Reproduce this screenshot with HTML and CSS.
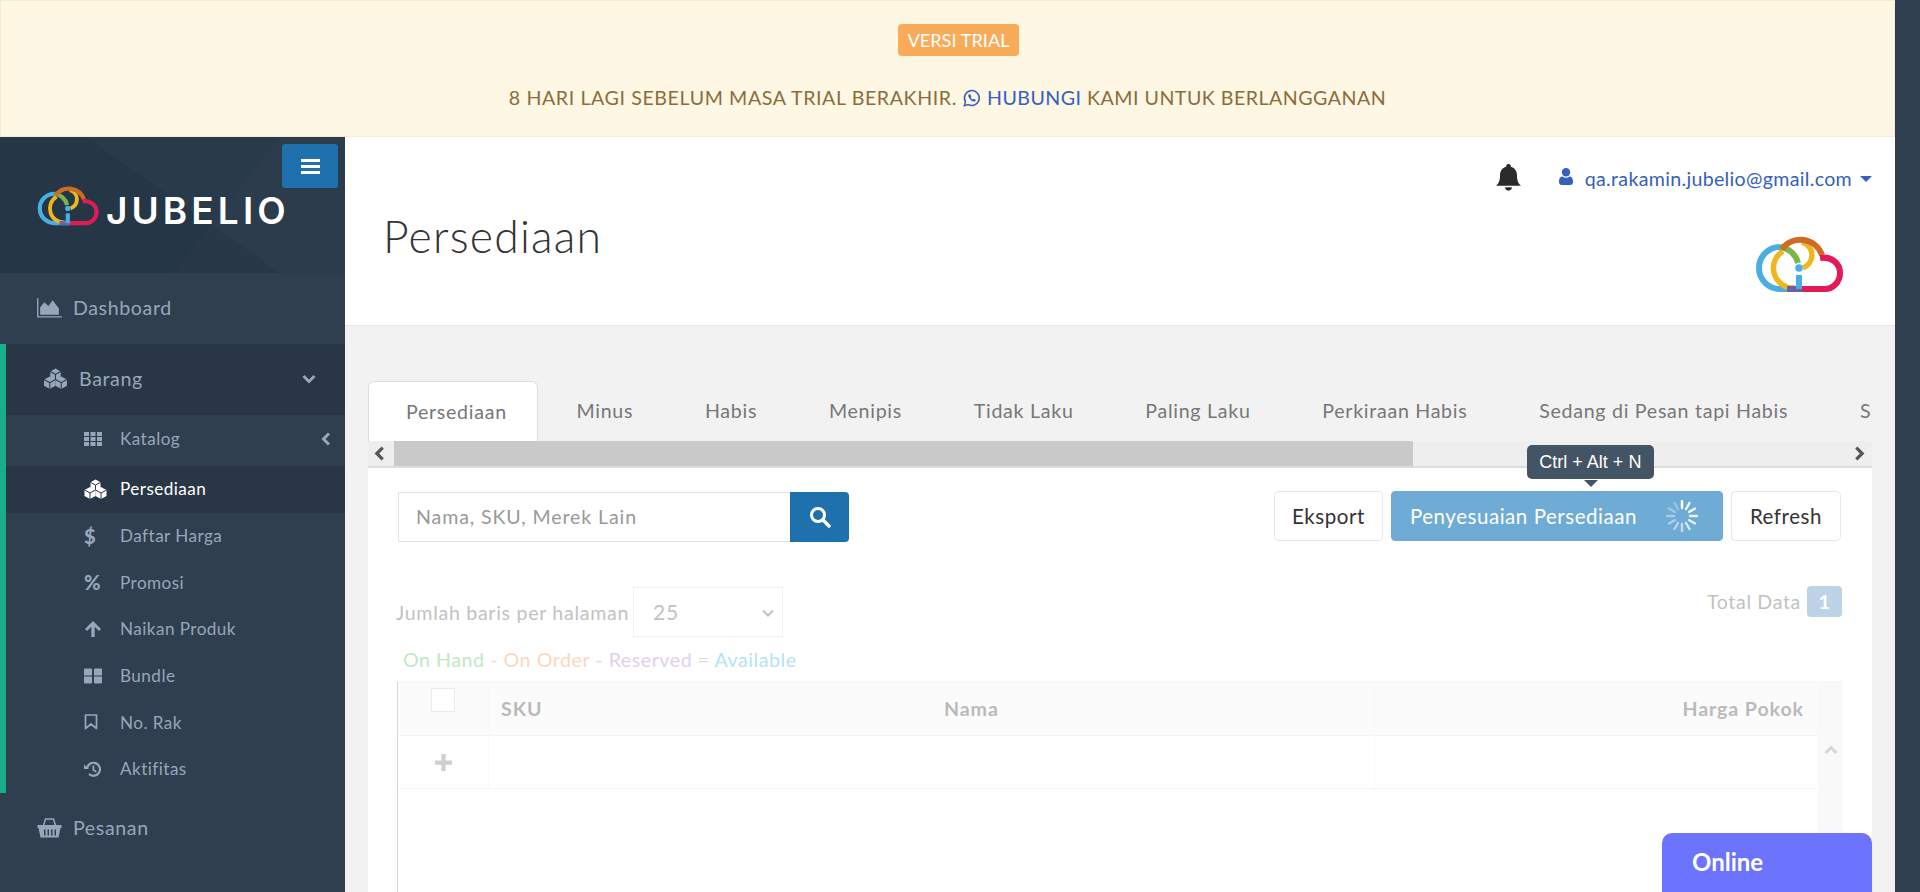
FILE: index.html
```html
<!DOCTYPE html>
<html>
    <head>
        <title>Jubelio - Persediaan</title>
        <link rel="stylesheet" href="styles.css">
    </head>
    <body>
        <svg class="defs" width="0" height="0">
            <symbol id="i-cubes" viewBox="0 0 24 20">
                <g class="cube"><path d="M12 .5l5 2.8v5.6l-5 2.8-5-2.8V3.300z"/><path class="cut" d="M7 3.300l5 2.800 5-2.800M12 6.100v5.600"/></g>
                <g class="cube"><path d="M6.500 8l5.500 3v6l-5.500 3L1 17v-6z"/><path class="cut" d="M1 11l5.500 3 5.500-3M6.500 14v6"/></g>
                <g class="cube"><path d="M17.500 8l5.500 3v6l-5.500 3-5.500-3v-6z"/><path class="cut" d="M12 11l5.500 3 5.500-3M17.500 14v6"/></g>
            </symbol>
            <symbol id="i-logo" viewBox="10 6 90 57">
                <g fill="none" stroke-width="6">
                    <path stroke="#4aaee3" d="M35 17A21 21 0 0 0 35 59H57"/>
                    <path stroke="#efb71e" stroke-width="5.500" d="M38 21A20 20 0 0 0 50 58M57 12C64 14 67 20 67 25 67 31 63 36 58 38"/>
                    <path stroke="#7ab648" d="M35 17A21 21 0 0 1 53 33"/>
                    <path stroke="#cf6b22" d="M37 19A23 23 0 0 1 77 25"/>
                    <path stroke="#e01b57" d="M75 28C86 26 95 33 95 43 95 52 88 59 80 59H57"/>
                    <path stroke="#6b60a8" d="M42 59H57"/>
                    <path stroke="#4aaee3" d="M54 45V59"/>
                </g>
                <circle cx="54" cy="38" r="3.800" fill="#4aaee3"/>
            </symbol>
        </svg>

        <div class="page">
            <div class="banner">
                <span class="badge">VERSI TRIAL</span>
                <p class="banner-msg">
                    <span class="msg-lead">8 HARI LAGI SEBELUM MASA TRIAL BERAKHIR.</span>
                    <a href="#" class="link">
                        <svg class="ic-wa" viewBox="0 0 20 20"><path d="M2.500 17.500l1.100-4.100A7.800 7.800 0 1 1 6.700 16.400z" fill="none" stroke="currentColor" stroke-width="1.600"/><path d="M7 5.800c-1 1-.2 3.200 1.700 5.200s4.200 2.800 5.300 1.800l.6-1.300-2.200-1.200-.8.800c-1-.3-2.200-1.500-2.500-2.500l.8-.8-1.200-2.200z" fill="currentColor"/></svg>
                        HUBUNGI</a>
                    KAMI UNTUK BERLANGGANAN
                </p>
            </div>

            <div class="app">
                <div class="sidebar">
                    <div class="side-head">
                        <button class="burger"><span></span><span></span><span></span></button>
                        <svg class="side-logo"><use href="#i-logo"/></svg>
                        <span class="brand">JUBELIO</span>
                    </div>
                    <a class="menu-item" href="#">
                        <svg class="menu-ic" viewBox="0 0 24 20"><path d="M.7 1v18h23" fill="none" stroke="currentColor" stroke-width="1.300"/><path d="M3 17V10l4-5 4 3.500 4-5.500 6 8v6z" fill="currentColor"/></svg>
                        Dashboard
                    </a>
                    <div class="menu-open">
                        <a class="menu-item menu-parent" href="#">
                            <svg class="menu-ic"><use href="#i-cubes"/></svg>
                            Barang
                            <svg class="chev chev-down" viewBox="0 0 14 10"><path d="M1.500 2l5.500 5.500L12.500 2"/></svg>
                        </a>
                        <div class="submenu">
                            <a class="sub-item sub-first" href="#">
                                <svg class="sub-ic" viewBox="0 0 18 14"><path d="M0 0h5v4H0zM6.500 0h5v4h-5zM13 0h5v4h-5zM0 5h5v4H0zM6.500 5h5v4h-5zM13 5h5v4h-5zM0 10h5v4H0zM6.500 10h5v4h-5zM13 10h5v4h-5z" fill="currentColor"/></svg>
                                Katalog
                                <svg class="chev chev-left" viewBox="0 0 10 14"><path d="M8 1.500L2.500 7 8 12.500"/></svg>
                            </a>
                            <a class="sub-item active" href="#"><svg class="sub-ic sub-cubes"><use href="#i-cubes"/></svg>Persediaan</a>
                            <a class="sub-item" href="#"><span class="sub-glyph">$</span>Daftar Harga</a>
                            <a class="sub-item" href="#"><span class="sub-glyph">%</span>Promosi</a>
                            <a class="sub-item" href="#">
                                <svg class="sub-ic" viewBox="0 0 18 16"><path d="M9 0l8 8-2 2-4.300-4.200V16H7.300V5.800L3 10 1 8z" fill="currentColor"/></svg>
                                Naikan Produk
                            </a>
                            <a class="sub-item" href="#">
                                <svg class="sub-ic" viewBox="0 0 18 15"><path d="M0 1a1 1 0 0 1 1-1h6a1 1 0 0 1 1 1v5a1 1 0 0 1-1 1H0zM10 1a1 1 0 0 1 1-1h6a1 1 0 0 1 1 1v6h-8zM0 8h8v6a1 1 0 0 1-1 1H1a1 1 0 0 1-1-1zM10 8h8v6a1 1 0 0 1-1 1h-6a1 1 0 0 1-1-1z" fill="currentColor"/></svg>
                                Bundle
                            </a>
                            <a class="sub-item" href="#">
                                <svg class="sub-ic" viewBox="0 0 18 16"><path d="M1.500 1h11v13.500L7 10l-5.500 4.500z" fill="none" stroke="currentColor" stroke-width="1.700" stroke-linejoin="round"/></svg>
                                No. Rak
                            </a>
                            <a class="sub-item" href="#">
                                <svg class="sub-ic" viewBox="0 0 18 16"><path d="M3 7.500A6.500 6.500 0 1 1 5 13" fill="none" stroke="currentColor" stroke-width="2.200"/><path d="M0 3.500l5 4.500H0zM8.500 4.500h1.800v4l2.500 1.500-1 1.400-3.300-2z" fill="currentColor"/></svg>
                                Aktifitas
                            </a>
                        </div>
                    </div>
                    <a class="menu-item" href="#">
                        <svg class="menu-ic" viewBox="0 0 24 21"><path d="M6 8.500l2-6.500h8l2 6.500" fill="none" stroke="currentColor" stroke-width="1.500"/><path d="M0 8h24v3h-1l-2 9.500H3L1 11H0zM6.500 12.500v6h1.500v-6zM10 12.500v6h1.500v-6zM13.500 12.500v6H15v-6zM17 12.500v6h1.500v-6z" fill="currentColor" fill-rule="evenodd"/></svg>
                        Pesanan
                    </a>
                    <a class="menu-item" href="#">
                        <svg class="menu-ic" viewBox="0 0 24 20"><rect x="6" y="8" width="12" height="12" fill="currentColor"/></svg>
                        Pengiriman
                    </a>
                </div>

                <div class="main">
                    <div class="page-head">
                        <div class="topbar">
                            <svg class="ic-bell" viewBox="0 0 24 27"><path d="M12 0a2.200 2.200 0 0 1 2.200 2.700c4 1 6 4.300 6 8.300 0 6 1.800 8 3.800 10H0c2-2 3.800-4 3.800-10 0-4 2-7.300 6-8.300A2.200 2.200 0 0 1 12 0z"/><path d="M8.800 22.500a3.200 3.200 0 0 0 6.400 0z"/></svg>
                            <a href="#" class="user-link">
                                <svg class="ic-user" viewBox="0 0 14 17"><circle cx="7" cy="4.200" r="4.200"/><path d="M0 14c0-4 1.500-5.500 3.500-5.500 1 .8 2.200 1.200 3.500 1.200s2.500-.4 3.500-1.200c2 0 3.500 1.500 3.500 5.500 0 2-1.200 3-2.800 3H2.800C1.200 17 0 16 0 14z"/></svg>
                                qa.rakamin.jubelio@gmail.com
                                <span class="caret"></span>
                            </a>
                        </div>
                        <div class="title-row">
                            <h1 class="page-title">Persediaan</h1>
                            <svg class="head-logo"><use href="#i-logo"/></svg>
                        </div>
                    </div>

                    <div class="content">
                        <div class="tabs">
                            <a class="tab tab-active" href="#">Persediaan</a>
                            <a class="tab" href="#">Minus</a>
                            <a class="tab" href="#">Habis</a>
                            <a class="tab" href="#">Menipis</a>
                            <a class="tab" href="#">Tidak Laku</a>
                            <a class="tab" href="#">Paling Laku</a>
                            <a class="tab" href="#">Perkiraan Habis</a>
                            <a class="tab" href="#">Sedang di Pesan tapi Habis</a>
                            <a class="tab" href="#">Sudah di Pesan</a>
                        </div>
                        <div class="tab-scroll">
                            <span class="scroll-btn"><svg class="chev chev-scroll chev-back" viewBox="0 0 10 14"><path d="M8 1.500L2.500 7 8 12.500"/></svg></span>
                            <span class="scroll-thumb"></span>
                            <span class="scroll-rest"></span>
                            <span class="scroll-btn"><svg class="chev chev-scroll" viewBox="0 0 10 14"><path d="M2 1.500L7.500 7 2 12.500"/></svg></span>
                        </div>

                        <div class="panel">
                            <div class="toolbar">
                                <div class="search">
                                    <input class="search-input" placeholder="Nama, SKU, Merek Lain">
                                    <button class="search-btn">
                                        <svg viewBox="0 0 22 22" width="22" height="22"><circle cx="9" cy="9" r="6.500" fill="none" stroke="#fff" stroke-width="3"/><path d="M14 14l6 6" stroke="#fff" stroke-width="3.400" stroke-linecap="round"/></svg>
                                    </button>
                                </div>
                                <div class="actions">
                                    <button class="btn">Eksport</button>
                                    <div class="btn btn-primary">
                                        Penyesuaian Persediaan
                                        <svg class="spinner" viewBox="-16 -16 32 32">
                                            <path opacity="1" d="M0-15v7"/>
                                            <path opacity=".95" d="M7.500-13l-3.500 6"/>
                                            <path opacity=".9" d="M13-7.500l-6 3.500"/>
                                            <path opacity=".85" d="M15 0H8"/>
                                            <path opacity=".8" d="M13 7.500l-6-3.500"/>
                                            <path opacity=".75" d="M7.500 13L4 7"/>
                                            <path opacity=".6" d="M0 15V8"/>
                                            <path opacity=".5" d="M-7.500 13L-4 7"/>
                                            <path opacity=".45" d="M-13 7.500l6-3.500"/>
                                            <path opacity=".4" d="M-15 0h7"/>
                                            <path opacity=".35" d="M-13-7.500l6 3.500"/>
                                            <path opacity=".3" d="M-7.500-13l3.500 6"/>
                                        </svg>
                                        <div class="tooltip">Ctrl + Alt + N</div>
                                    </div>
                                    <button class="btn btn-refresh">Refresh</button>
                                </div>
                            </div>

                            <div class="faded">
                                <div class="list-meta">
                                    <div class="per-page">
                                        <span>Jumlah baris per halaman</span>
                                        <div class="select">25<svg class="chev chev-select" viewBox="0 0 14 10"><path d="M2 2.500l5 5 5-5"/></svg></div>
                                    </div>
                                    <div class="total">Total Data <span class="total-num">1</span></div>
                                </div>
                                <div class="legend">
                                    <span class="c-green">On Hand</span> - <span class="c-orange">On Order</span> - <span class="c-purple">Reserved</span> = <span class="c-blue">Available</span>
                                </div>
                                <div class="grid">
                                    <div class="cell cell-head cell-check"><span class="checkbox"></span></div>
                                    <div class="cell cell-head">SKU</div>
                                    <div class="cell cell-head cell-name">Nama</div>
                                    <div class="cell cell-head cell-price">Harga Pokok</div>
                                    <div class="cell cell-bar"></div>
                                    <div class="cell cell-check"><svg viewBox="0 0 16 16" width="17" height="17"><path d="M6 0h4v6h6v4h-6v6H6v-6H0V6h6z" fill="#888"/></svg></div>
                                    <div class="cell"></div>
                                    <div class="cell"></div>
                                    <div class="cell cell-price"></div>
                                    <div class="cell cell-bar"><svg class="chev chev-bar" viewBox="0 0 14 10"><path d="M1.500 8L7 2.500 12.500 8"/></svg></div>
                                    <div class="grid-rest"></div>
                                    <div class="cell-bar bar-rest"></div>
                                </div>
                            </div>
                        </div>
                    </div>
                    <div class="chat-tab">Online</div>
                </div>
            </div>
        </div>
    </body>
</html>
```

FILE: styles.css
```css
html, body {
    height: 100%;
}
body {
    background: #2f3f50;
    font-family: Lato, "Open Sans", sans-serif;
    font-size: 19.6px;
    margin: 0px;
    overflow: hidden;
}
a {
    text-decoration: none;
}
.defs {
    display: block;
    height: 0px;
}
.page {
    width: 1895px;
    height: 892px;
    display: flex;
    flex-direction: column;
}

/* trial banner */
.banner {
    background: #fdf7e3;
    border: 1px solid #faebcc;
    box-sizing: border-box;
    height: 137px;
    flex: none;
    text-align: center;
    color: #8a6d3b;
    padding-top: 23px;
}
.badge {
    display: inline-block;
    background: #f9ab5a;
    color: #ffffff;
    font-size: 18.2px;
    line-height: 32px;
    height: 32px;
    padding: 0px 9px;
    margin-left: 22px;
    border-radius: 4px;
}
.banner-msg {
    margin: 28px 0px 0px 0px;
    line-height: 28px;
    letter-spacing: 0.49px;
}
.msg-lead {
    letter-spacing: 0.6px;
}
.link {
    color: #3461bb;
}
.ic-wa {
    width: 19px;
    height: 19px;
    vertical-align: -3px;
}

.app {
    display: flex;
    flex: 1;
    min-height: 0px;
}

/* sidebar */
.sidebar {
    width: 345px;
    flex: none;
    background: #2f3f50;
    color: #98a6ba;
}
.side-head {
    position: relative;
    height: 136px;
    box-sizing: border-box;
    display: flex;
    align-items: flex-start;
    padding: 49px 0px 0px 37px;
    background:
        linear-gradient(128deg, transparent 62%, rgba(255,255,255,0.012) 62%, rgba(255,255,255,0.012) 100%),
        linear-gradient(35deg, transparent 52%, rgba(255,255,255,0.018) 52%),
        #253647;
}
.burger {
    position: absolute;
    top: 7px;
    right: 7px;
    width: 56px;
    height: 44px;
    background: #1f71ad;
    border: none;
    border-radius: 3px;
    display: flex;
    flex-direction: column;
    justify-content: center;
    align-items: center;
    gap: 3px;
    padding: 0px;
}
.burger span {
    display: block;
    width: 19px;
    height: 3px;
    background: #ffffff;
}
.side-logo {
    width: 63px;
    height: 40px;
    flex: none;
}
.brand {
    font-family: Inter, sans-serif;
    font-weight: 600;
    font-size: 37px;
    line-height: 40px;
    letter-spacing: 4.1px;
    color: #ffffff;
    margin: 5px 0px 0px 6px;
}
.menu-item {
    display: flex;
    align-items: center;
    height: 71px;
    box-sizing: border-box;
    padding: 0px 0px 2px 37px;
    color: #98a6ba;
    letter-spacing: 0.62px;
}
.menu-ic {
    width: 25px;
    height: 21px;
    flex: none;
    margin-right: 11px;
    --cut: #283646;
}
.menu-open {
    border-left: 6px solid #19ad8a;
}
.menu-parent {
    background: #283646;
}
.chev {
    fill: none;
    stroke: currentColor;
    stroke-width: 3;
}
.chev-down {
    width: 14px;
    height: 10px;
    margin-left: auto;
    margin-right: 29px;
}
.sub-item {
    display: flex;
    align-items: center;
    height: 46.7px;
    box-sizing: border-box;
    padding: 0px 0px 1px 78px;
    color: #98a6ba;
    font-size: 17.14px;
    letter-spacing: 0.45px;
    --cut: #2f3f50;
}
.sub-first {
    height: 48px;
    margin-bottom: 3px;
}
.sub-item.active {
    background: #283646;
    color: #ffffff;
    --cut: #283646;
}
.sub-ic {
    width: 18px;
    height: 16px;
    flex: none;
    margin-right: 18px;
}
.sub-cubes {
    width: 25px;
    height: 20px;
    margin: 0px 12px 0px -1px;
}
.sub-glyph {
    width: 36px;
    flex: none;
    font-weight: 900;
    font-size: 20px;
}
.chev-left {
    width: 10px;
    height: 14px;
    margin-left: auto;
    margin-right: 14px;
}
.cube path {
    fill: currentColor;
}
.cube .cut {
    fill: none;
    stroke: var(--cut);
    stroke-width: 1;
}

/* main column */
.main {
    position: relative;
    flex: 1;
    min-width: 0px;
    background: #f2f2f2;
    display: flex;
    flex-direction: column;
    overflow: hidden;
}
.page-head {
    background: #ffffff;
    border-bottom: 1px solid #e6e6e6;
    box-sizing: border-box;
    height: 189px;
    flex: none;
    padding: 27px 23px 0px 38px;
}
.topbar {
    display: flex;
    justify-content: flex-end;
    align-items: center;
    height: 28px;
}
.ic-bell {
    width: 25px;
    height: 28px;
    fill: #2b2b2b;
    margin-right: 38px;
}
.user-link {
    color: #3461bb;
    display: flex;
    align-items: center;
    letter-spacing: 0.32px;
}
.ic-user {
    width: 14px;
    height: 17px;
    fill: #3461bb;
    margin-right: 12px;
    margin-top: -4px;
}
.caret {
    width: 0px;
    height: 0px;
    border-left: 6px solid transparent;
    border-right: 6px solid transparent;
    border-top: 6px solid #3461bb;
    margin-left: 8px;
    margin-top: 2px;
}
.title-row {
    display: flex;
    justify-content: space-between;
}
.page-title {
    font-weight: 300;
    font-size: 44.5px;
    line-height: 60px;
    letter-spacing: 1.2px;
    color: #333333;
    margin: 14px 0px 0px 0px;
}
.head-logo {
    width: 90px;
    height: 57px;
    margin: 44px 27px 0px 0px;
}

.content {
    flex: 1;
    display: flex;
    flex-direction: column;
    min-height: 0px;
    padding: 55px 23px 0px 23px;
}
.tabs {
    display: flex;
    height: 60px;
    flex: none;
    overflow: hidden;
    white-space: nowrap;
}
.tab {
    padding: 0px 33px 0px 35.75px;
    margin-right: 3px;
    line-height: 60px;
    color: #777777;
    letter-spacing: 0.72px;
}
.tab-active {
    background: #ffffff;
    border: 1px solid #dddddd;
    border-bottom: none;
    border-radius: 6px 6px 0px 0px;
    padding: 0px 30px 0px 37px;
}
.tab-scroll {
    display: flex;
    height: 25px;
    flex: none;
    background: #eeeeee;
    border-bottom: 2px solid #dddddd;
    color: #555555;
}
.scroll-btn {
    width: 26px;
    flex: none;
    display: flex;
    align-items: center;
    justify-content: center;
}
.chev-scroll {
    width: 11px;
    height: 15px;
}
.chev-back {
    margin-right: 3px;
}
.scroll-thumb {
    width: 1019px;
    background: #c9c9c9;
}
.scroll-rest {
    flex: 1;
}
.panel {
    flex: 1;
    background: #ffffff;
    padding: 24px 30px 0px 29px;
    min-height: 0px;
}
.toolbar {
    display: flex;
    justify-content: space-between;
    height: 50px;
}
.search {
    display: flex;
    height: 50px;
    margin-left: 1px;
}
.search-input {
    width: 392px;
    box-sizing: border-box;
    border: 1px solid #e2e2e2;
    border-right: none;
    font-family: inherit;
    font-size: 19.6px;
    letter-spacing: 0.88px;
    padding: 0px 17px 2px 17px;
    outline: none;
}
.search-input::placeholder {
    color: #999999;
}
.search-btn {
    width: 59px;
    background: #1f71ad;
    border: none;
    border-radius: 0px 4px 4px 0px;
    padding: 0px;
    display: flex;
    align-items: center;
    justify-content: center;
}
.actions {
    display: flex;
    gap: 8px;
    height: 50px;
    margin: -1px 1px 0px 0px;
}
.btn {
    font-family: inherit;
    font-size: 20.5px;
    letter-spacing: 0.55px;
    color: #333333;
    background: #ffffff;
    border: 1px solid #e8e8e8;
    border-radius: 4px;
    box-sizing: border-box;
    padding: 0px 17px;
    height: 50px;
}
.btn-refresh {
    padding: 0px 18px;
}
.btn-primary {
    position: relative;
    width: 332px;
    background: #6eabd5;
    border-color: #6eabd5;
    color: #ffffff;
    display: flex;
    align-items: center;
    padding-left: 18px;
}
.spinner {
    position: absolute;
    right: 24px;
    top: 8px;
    width: 32px;
    height: 32px;
    stroke: #ffffff;
    stroke-width: 2.400;
    stroke-linecap: round;
}
.tooltip {
    position: absolute;
    left: 135px;
    top: -47px;
    width: 127px;
    height: 34px;
    background: #435464;
    border-radius: 5px;
    color: #ffffff;
    font-family: "Liberation Sans", sans-serif;
    font-size: 18px;
    letter-spacing: 0px;
    line-height: 34px;
    text-align: center;
}
.tooltip::after {
    content: "";
    position: absolute;
    left: 57px;
    top: 35px;
    border-left: 7px solid transparent;
    border-right: 7px solid transparent;
    border-top: 7px solid #435464;
}

/* stuff under the loading overlay */
.faded {
    opacity: 0.4;
}
.list-meta {
    display: flex;
    justify-content: space-between;
    align-items: flex-start;
    margin-top: 44px;
    color: #666666;
}
.per-page {
    display: flex;
    align-items: center;
    gap: 4px;
    letter-spacing: 0.7px;
    margin: 1px 0px 0px -1px;
}
.select {
    position: relative;
    width: 150px;
    height: 50px;
    box-sizing: border-box;
    border: 1px solid #dddddd;
    line-height: 48px;
    padding-left: 19px;
    font-size: 21px;
}
.chev-select {
    position: absolute;
    right: 7px;
    top: 20px;
    width: 14px;
    height: 10px;
    stroke-width: 2;
}
.total {
    display: flex;
    align-items: center;
    gap: 6px;
    height: 31px;
    letter-spacing: 0.65px;
}
.total-num {
    width: 35px;
    height: 31px;
    background: #5c96c6;
    border-radius: 4px;
    color: #ffffff;
    font-weight: 700;
    text-align: center;
    line-height: 31px;
}
.legend {
    margin: 8px 0px 0px 6px;
    line-height: 29px;
    color: #aaaaaa;
    letter-spacing: 0.55px;
}
.c-green {
    color: #5fc76b;
}
.c-orange {
    color: #f79d5c;
}
.c-purple {
    color: #b687d6;
}
.c-blue {
    color: #4eb2f3;
}
.grid {
    display: grid;
    grid-template-columns: 91px 455px 430px 444px 25px;
    grid-template-rows: 54px 53px 200px;
    margin-top: 7px;
    border-top: 1px solid #eeeeee;
    border-left: 1px solid #7ea3c4;
    border-right: 1px solid #bbbbbb;
    width: 1445px;
    box-sizing: border-box;
}
.cell {
    border-bottom: 1px solid #e8e8e8;
    display: flex;
    align-items: center;
    font-weight: 400;
    box-sizing: border-box;
}
.cell-head {
    background: #f6f6f6;
    font-weight: 700;
    color: #555555;
    padding-left: 12px;
    letter-spacing: 0.9px;
}
.cell-name {
    padding-left: 0px;
}
.cell-check {
    justify-content: center;
    padding: 0px;
    border-right: 1px solid #eeeeee;
}
.cell-price {
    justify-content: flex-end;
    padding-right: 14px;
    border-left: 1px solid #eeeeee;
}
.checkbox {
    width: 24px;
    height: 24px;
    box-sizing: border-box;
    background: #ffffff;
    border: 1px solid #cccccc;
    margin-top: -17px;
}
.cell-bar {
    background: #f1f1f1;
    border-bottom: none;
    justify-content: center;
    align-items: flex-start;
    color: #999999;
}
.chev-bar {
    width: 14px;
    height: 10px;
    margin-top: 9px;
}
.grid-rest {
    grid-column: 1 / 5;
}
.chat-tab {
    position: absolute;
    right: 23px;
    bottom: 0px;
    width: 210px;
    height: 59px;
    box-sizing: border-box;
    background: #6b73ff;
    border-radius: 10px 10px 0px 0px;
    color: #ffffff;
    font-weight: 700;
    font-size: 24px;
    padding: 14px 0px 0px 30px;
}
```
